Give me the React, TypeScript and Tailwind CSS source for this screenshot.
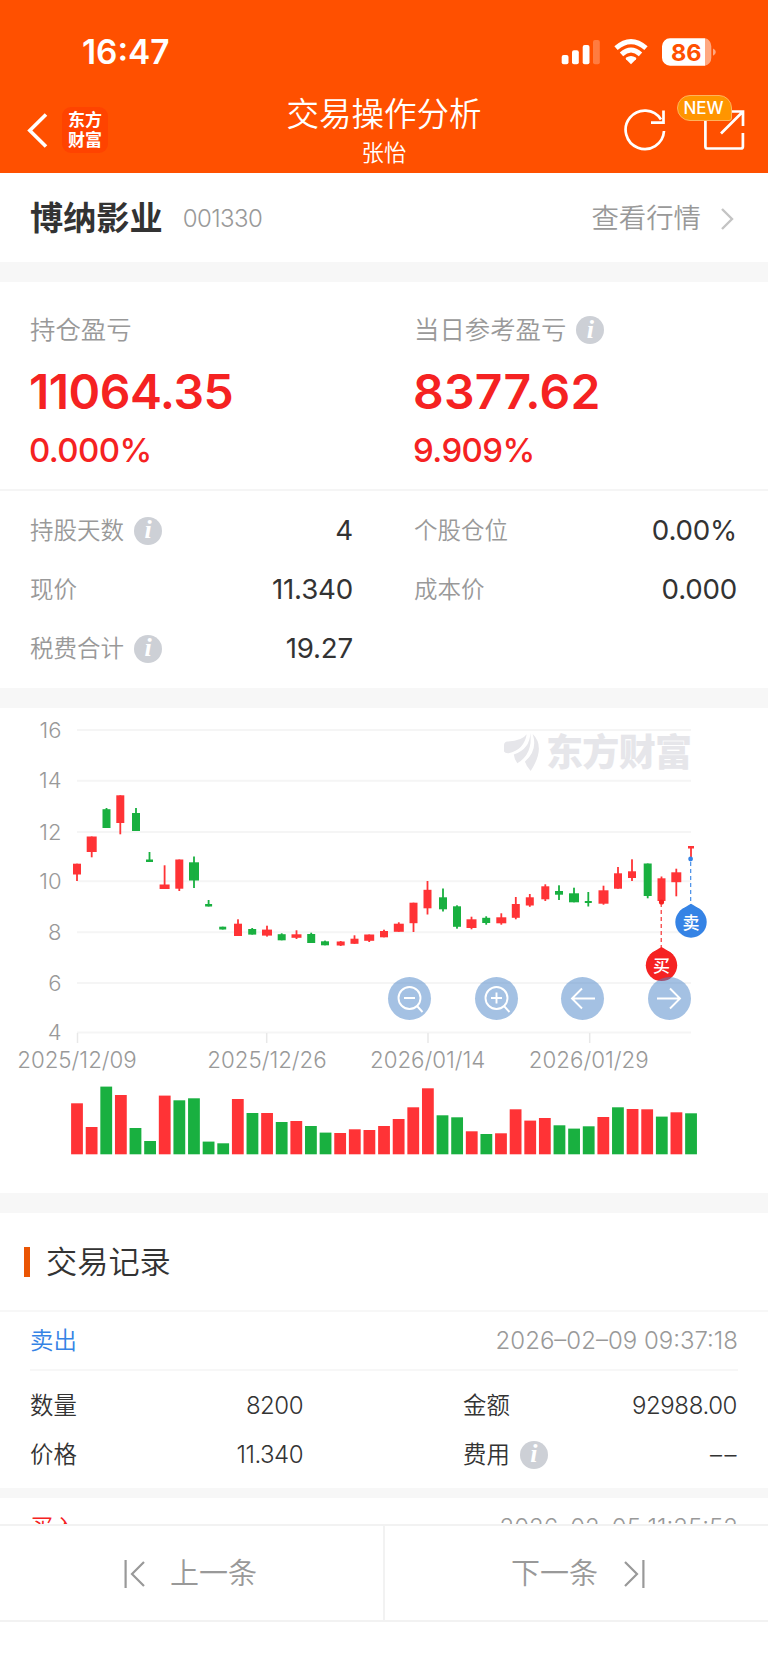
import type { ReactNode } from "react";
import clsx from "clsx";

const RED = "#ff3336";
const GREEN = "#19b040";

// [x, width, open/close top, open/close bottom, high, low, up]
type Candle = [number, number, number, number, number, number, boolean];

const CANDLES: Candle[] = [
  [77, 8, 863.7, 874.5, 863.7, 881, true],
  [91.7, 10, 836.5, 852, 836.5, 857.3, true],
  [106.5, 8, 809.2, 828, 808, 828, false],
  [120.3, 8, 795.3, 823, 795.3, 834.3, true],
  [136, 8, 813, 831, 808, 831, false],
  [149.5, 7, 859.5, 862, 852, 862, false],
  [164.6, 10, 884.5, 889, 865.3, 889, true],
  [179.3, 8, 859.5, 888.7, 859.5, 891, true],
  [194, 10, 862.3, 880.5, 856.5, 888, false],
  [208.6, 7, 904, 906.5, 900, 906.5, false],
  [222.7, 7, 926.7, 929.5, 926.7, 929.5, false],
  [238, 8, 923.7, 936, 919.3, 936, true],
  [252.2, 8, 929, 934.6, 928, 934.6, false],
  [267, 10, 929.6, 935.6, 925.7, 936.6, true],
  [281.7, 8, 934.2, 940.3, 933.3, 940.3, false],
  [296.5, 10, 934.3, 937.8, 930.3, 939, true],
  [311.2, 8, 934, 943, 932.7, 943, false],
  [325, 8, 941.3, 945.3, 940.6, 945.3, false],
  [340.7, 8, 941.5, 945.5, 941, 946, true],
  [354.5, 8, 938.7, 943.8, 935.3, 943.8, true],
  [369.2, 10, 934.5, 940.8, 934.5, 942, true],
  [384, 8, 931, 937.3, 929.7, 937.3, true],
  [398.8, 10, 923.7, 931.8, 922.3, 931.8, true],
  [413.5, 8, 902.7, 923.2, 902.7, 932, true],
  [427.5, 8, 889.8, 908.3, 881, 914.5, true],
  [443, 8, 897.3, 909.3, 888.5, 911.5, false],
  [457, 8, 906.3, 926.8, 905.3, 928.7, false],
  [471.5, 10, 919.3, 928, 916.7, 929.3, true],
  [486.2, 8, 917.8, 923, 916.3, 924.7, false],
  [501.3, 10, 917.3, 923.3, 913.3, 924.7, true],
  [515.8, 8, 904, 917.8, 897, 919.3, true],
  [529.8, 8, 897.3, 905.5, 894, 906.8, true],
  [545.3, 8, 886.3, 899.3, 884.3, 901, true],
  [559, 8, 891, 894.7, 885.3, 900, false],
  [574, 10, 893.3, 902.3, 887.7, 902.3, false],
  [588.3, 7, 901, 903, 892, 906.5, false],
  [603.5, 10, 890.3, 903.7, 885.7, 904.7, true],
  [618, 8, 873.3, 888.7, 867, 888.7, true],
  [632, 8, 871.3, 878, 859.3, 881, true],
  [647.7, 8, 863.5, 896, 863.5, 898.3, false],
  [661.5, 8, 878.3, 901, 876.5, 903, true],
  [676.3, 10, 872.3, 882.2, 868.7, 896.3, true],
  [691, 6, 846, 848.5, 846, 858, true],
];

const VOLUMES: [number, boolean][] = [
  [51, true], [27.3, true], [67.7, false], [59.3, true], [26.3, false], [13.3, false], [58.7, true],
  [54, false], [56, false], [12.7, false], [11, false], [55.3, true], [41.3, false], [41.3, true],
  [32.3, false], [33.3, true], [28.3, false], [21.7, false], [21.3, true], [25, true], [24.3, true],
  [28.3, true], [35.3, true], [47, true], [66, true], [39, false], [37, false], [23, true],
  [20.3, false], [21, true], [45, true], [33.7, true], [36.3, true], [29, false], [25.7, false],
  [28, false], [37.3, true], [47, false], [45.3, true], [45, true], [37.7, false], [42, true], [41, false],
];

const Y_TICKS: [number, number][] = [
  [16, 730], [14, 780.7], [12, 832], [10, 881.3], [8, 932.3], [6, 983], [4, 1032.5],
];

const X_TICKS: [string, number, number][] = [
  ["2025/12/09", 77.5, 77],
  ["2025/12/26", 266.7, 267],
  ["2026/01/14", 428, 427.7],
  ["2026/01/29", 589.7, 588.7],
];

export default function App() {
  return (
    <div className="flex h-[1663px] w-[768px] flex-col overflow-hidden bg-white font-['Inter','Noto_Sans_CJK_SC',sans-serif] text-[#333]">
      <Header />
      <main className="min-h-0 flex-1 overflow-hidden">
        <div className="flex h-[89px] items-center pl-[30px] pr-[34px] pt-[2px]">
          <h2 className="text-[33.2px] font-bold">博纳影业</h2>
          <span className="ml-[20px] text-[24px] font-light tracking-[-0.6px] text-[#999]">001330</span>
          <span className="ml-auto text-[27.4px] font-[350] text-[#999]">查看行情</span>
          <svg className="ml-[20px] h-[24px] w-[13px]" viewBox="0 0 13 24" fill="none" stroke="#c4c4c4" strokeWidth="2.4">
            <path d="M1 2l10 10L1 22" />
          </svg>
        </div>
        <Gap />
        <Summary />
        <Gap />
        <Chart />
        <Gap />
        <div className="flex h-[99px] items-center border-b-2 border-[#f7f7f7] pl-6">
          <span className="h-[30px] w-[6px] bg-[#ea5504]" />
          <h3 className="ml-4 pt-px text-[31.2px] font-[350]">交易记录</h3>
        </div>
        <div className="mx-[30px] flex h-[59px] items-center justify-between border-b-2 border-[#f7f7f7]">
          <span className="text-[23.4px] font-[350] text-[#3583e5]">卖出</span>
          <span className="text-[24px] font-light text-[#999]">2026–02–09 09:37:18</span>
        </div>
        <div className="flex h-[117px] flex-col px-[30px] pt-[10px]">
          <RecordRow left="数量" leftValue="8200" right="金额" rightValue="92988.00" />
          <RecordRow left="价格" leftValue="11.340" right="费用" rightValue={<span className="-mr-[2px] tracking-[2.5px]">––</span>} info />
        </div>
        <div className="h-[10px] bg-[#f7f7f7]" />
        <div className="mx-[30px] flex h-[59px] items-center justify-between">
          <span className="text-[23.4px] font-[350] text-[#f52222]">买入</span>
          <span className="text-[24px] font-light text-[#999]">2026–02–05 11:25:52</span>
        </div>
      </main>
      <footer className="mb-[41px] flex h-[98px] shrink-0 border-y-2 border-[#f2f2f2] text-[29px] font-[350] text-[#999]">
        <button className="flex w-[385px] items-center border-r-2 border-[#f2f2f2] pl-[124px] pt-[2px]">
          <svg className="h-[28px] w-[22px]" viewBox="0 0 22 28" fill="none" stroke="#999" strokeWidth="2.2">
            <path d="M1.6 0v28M20 2L8 14l12 12" />
          </svg>
          <span className="ml-[24px]">上一条</span>
        </button>
        <button className="flex flex-1 items-center pl-[126px] pt-[2px]">
          <span>下一条</span>
          <svg className="ml-[25px] h-[28px] w-[22px]" viewBox="0 0 22 28" fill="none" stroke="#999" strokeWidth="2.2">
            <path d="M20.4 0v28M2 2l12 12L2 26" />
          </svg>
        </button>
      </footer>
    </div>
  );
}

function Gap() {
  return <div className="h-5 bg-[#f7f7f7]" />;
}

function Header() {
  return (
    <header className="flex h-[173px] shrink-0 flex-col bg-[#ff5000] text-white">
      <div className="flex h-[84px] items-center pl-[82px] pr-[51px] pt-[20px]">
        <span className="text-[33.4px] font-semibold">16:47</span>
        <svg className="ml-auto h-[28px] w-[156px]" viewBox="561 37 156 28" fill="#fff">
          <rect x="561.7" y="54" width="6.8" height="9.2" rx="2" />
          <rect x="572" y="49.3" width="6.8" height="13.9" rx="2" />
          <rect x="582.7" y="44" width="6.8" height="19.2" rx="2" />
          <rect x="593" y="39" width="6.8" height="24.2" rx="2" opacity="0.25" />
          <path d="M631 63.2l-5-5q-.8-.8.2-1.6q4.8-3.3 9.6 0q1 .8.2 1.6z" />
          <path d="M621.5 53.3q9.5-8.6 19 0" fill="none" stroke="#fff" strokeWidth="5" />
          <path d="M616 47.2q15-13.2 30 0" fill="none" stroke="#fff" strokeWidth="5" />
          <path d="M670 37.3h35v27.4h-35a8 8 0 0 1-8-8v-11.4a8 8 0 0 1 8-8z" />
          <path d="M705 37.3a7 8 0 0 1 6.3 8v11.4a7 8 0 0 1-6.3 8z" opacity="0.5" />
          <path d="M713 47.5q2.8 1 2.8 3.6t-2.8 3.6z" opacity="0.5" />
          <text x="686.3" y="59.5" textAnchor="middle" fontSize="23.5" fontWeight="700" fill="#ff5000">
            86
          </text>
        </svg>
      </div>
      <div className="flex h-[89px] items-center">
        <div className="flex w-[240px] items-center pl-[27px] pt-[3px]">
          <svg className="h-[36px] w-[22px]" viewBox="0 0 22 36" fill="none" stroke="#fff" strokeWidth="3.6">
            <path d="M19 2.5L2.8 18.5 19 34.5" />
          </svg>
          <div className="ml-[13px] flex size-[46px] flex-col items-center justify-center rounded-[9px] bg-[#ff4300] pt-px text-[17px] font-bold leading-[19.5px]">
            <span>东方</span>
            <span>财富</span>
          </div>
        </div>
        <div className="flex flex-1 flex-col items-center pt-1">
          <h1 className="text-[32.5px] font-[350] leading-[44px]">交易操作分析</h1>
          <p className="text-[22.4px] font-[350] leading-[32px]">张怡</p>
        </div>
        <div className="relative flex w-[240px] items-center justify-end gap-[37px] pr-[23px] pt-[3px]">
          <svg className="size-[42px]" viewBox="624 109 42 42" fill="none" stroke="#fff" strokeWidth="2.7">
            <path d="M664 131a19.2 19.2 0 1 1-3-11.5M663.5 110.5v12.2H651" />
          </svg>
          <svg className="size-[42px]" viewBox="703 109 42 42" fill="none" stroke="#fff" strokeWidth="2.7">
            <path d="M705.4 117v29.5q0 2 2 2h33.5q2 0 2-2V133M731 111.5h12V126M743 111.5L721 133.5" />
          </svg>
          <span className="absolute left-[149px] top-[-11px] flex h-[26px] w-[55px] items-center justify-center rounded-[13px] rounded-br-[3px] border border-[#ffb35c] bg-[#ff9500] pr-[2px] pt-px text-[17px] font-medium">
            NEW
          </span>
        </div>
      </div>
    </header>
  );
}

function InfoIcon() {
  return (
    <span className="flex size-[28px] shrink-0 items-center justify-center rounded-full bg-[#cdd0d6] pb-px font-['Liberation_Serif',serif] text-[26px] font-bold italic leading-none text-white">
      i
    </span>
  );
}

function Summary() {
  return (
    <section className="h-[406px]">
      <div className="flex h-[209px] border-b-2 border-[#f5f5f5]">
        <Profit label="持仓盈亏" value="11064.35" percent="0.000%" className="tracking-[-0.5px]" />
        <Profit label="当日参考盈亏" value="8377.62" percent="9.909%" className="tracking-[0.2px]" info />
      </div>
      <div className="grid grid-cols-2 pt-[10px]">
        <Stat label="持股天数" value="4" info />
        <Stat label="个股仓位" value="0.00%" />
        <Stat label="现价" value="11.340" />
        <Stat label="成本价" value="0.000" />
        <Stat label="税费合计" value="19.27" info />
      </div>
    </section>
  );
}

interface ProfitProps {
  label: string;
  value: string;
  percent: string;
  className?: string;
  info?: boolean;
}

function Profit({ label, value, percent, className, info }: ProfitProps) {
  return (
    <div className="flex w-1/2 flex-col pl-[30px] pt-[30px]">
      <div className="flex h-9 items-center gap-[10px] text-[25.4px] font-[350] text-[#999]">
        {label}
        {info && <InfoIcon />}
      </div>
      <div className={clsx("-ml-px mt-[14px] text-[48px] font-[570] leading-[60px] text-[#f52222]", className)}>{value}</div>
      <div className="-ml-px mt-[8px] text-[33px] font-medium leading-[40px] tracking-[-0.6px] text-[#f52222]">{percent}</div>
    </div>
  );
}

function Stat({ label, value, info }: { label: string; value: string; info?: boolean }) {
  return (
    <div className="flex h-[59px] items-center pl-[30px] pr-[31px]">
      <span className="mr-[10px] text-[23.5px] font-[350] text-[#999]">{label}</span>
      {info && <InfoIcon />}
      <span className="ml-auto text-[27.7px] font-[370] tracking-[-0.2px]">{value}</span>
    </div>
  );
}

function RecordRow(props: { left: string; leftValue: string; right: string; rightValue: ReactNode; info?: boolean }) {
  return (
    <div className="flex h-[49px] items-center text-[23.4px] font-[350]">
      <div className="flex w-[273px] items-center justify-between">
        <span>{props.left}</span>
        <span className="text-[24px] tracking-[-0.5px]">{props.leftValue}</span>
      </div>
      <div className="ml-[160px] flex flex-1 items-center pr-px">
        <span className="mr-[10px]">{props.right}</span>
        {props.info && <InfoIcon />}
        <span className="ml-auto text-[24px] tracking-[-0.4px]">{props.rightValue}</span>
      </div>
    </div>
  );
}

function Chart() {
  return (
    <section className="relative h-[485px]">
      <svg className="block h-[485px] w-[768px]" viewBox="0 708 768 485">
        {Y_TICKS.map(([label, y]) => (
          <g key={label}>
            <path d={`M77 ${y}H691`} stroke="#f5f5f5" strokeWidth="2" />
            <text x="61.5" y={y + 7.7} textAnchor="end" fontSize="22" fontWeight="350" fill="#999">
              {label}
            </text>
          </g>
        ))}
        {X_TICKS.map(([label, x, cx]) => (
          <g key={label}>
            <path d={`M${x} 1033v10`} stroke="#e8e8e8" strokeWidth="1.5" />
            <text x={cx} y="1068" textAnchor="middle" fontSize="22.3" fontWeight="350" fill="#999">
              {label}
            </text>
          </g>
        ))}
        <g fill="#e6e6ea">
          <path d="M526.7 734.3Q522 741 507.5 741.5Q504.3 741.8 504 745V751.5Q505 753.5 508.5 753.3Q524 750 526.7 734.3z" />
          <path d="M530.3 733Q530 749 513.8 754.5Q514.5 760 517.3 763.3Q533 754 530.3 733z" />
          <path d="M532.7 734Q546 747 530.7 771Q526 766 525 761.5Q538 750 532.7 734z" />
          <text x="546" y="765.5" fontSize="37" fontWeight="800" textLength="146">
            东方财富
          </text>
        </g>
        {CANDLES.map(([x, w, top, bottom, high, low, up]) => (
          <g key={x} fill={up ? RED : GREEN}>
            <rect x={x - w / 2} y={top} width={w} height={bottom - top} />
            <rect x={x - 0.9} y={high} width="1.8" height={low - high} />
          </g>
        ))}
        {VOLUMES.map(([h, up], i) => (
          <rect key={i} x={71.1 + i * 14.62} y={1154.3 - h} width="11.8" height={h} fill={up ? RED : GREEN} />
        ))}
        <Pin x={691} y={922} from={862} color="#3583e5" label="卖" />
        <circle cx="690.6" cy="859" r="2.4" fill="#3583e5" />
        <Pin x={661.5} y={965.3} from={903} color="#f52222" label="买" />
        <circle cx="661.5" cy="902" r="2.6" fill="#f52222" />
      </svg>
      <div className="absolute left-[388px] top-[268.5px] flex w-[303px] justify-between">
        <ChartButton>
          <circle cx="21.5" cy="21" r="11" />
          <path d="M29 29l5.5 6M16 21h11" />
        </ChartButton>
        <ChartButton>
          <circle cx="21.5" cy="21" r="11" />
          <path d="M29 29l5.5 6M16 21h11M21.5 15.5v11" />
        </ChartButton>
        <ChartButton>
          <path d="M34 21.5H11M21 11.5l-10 10 10 10" />
        </ChartButton>
        <ChartButton flip>
          <path d="M34 21.5H11M21 11.5l-10 10 10 10" />
        </ChartButton>
      </div>
    </section>
  );
}

function ChartButton({ children, flip }: { children: ReactNode; flip?: boolean }) {
  return (
    <button className={clsx("size-[43px] rounded-full bg-[#4983c8]/50", flip && "-scale-x-100")}>
      <svg className="size-full" viewBox="0 0 43 43" fill="none" stroke="#fff" strokeWidth="1.9">
        {children}
      </svg>
    </button>
  );
}

function Pin({ x, y, from, color, label }: { x: number; y: number; from: number; color: string; label: string }) {
  return (
    <g>
      <path d={`M${x - 0.3} ${from}V${y - 17}`} stroke={color} strokeWidth="1.1" strokeDasharray="4 3" />
      <circle cx={x} cy={y} r="15.7" fill={color} />
      <path d={`M${x - 12} ${y - 10.5}Q${x - 4} ${y - 16} ${x} ${y - 18.3}Q${x + 4} ${y - 16} ${x + 12} ${y - 10.5}z`} fill={color} />
      <text x={x} y={y + 6.8} textAnchor="middle" fontSize="17" fontWeight="500" fill="#fff">
        {label}
      </text>
    </g>
  );
}
